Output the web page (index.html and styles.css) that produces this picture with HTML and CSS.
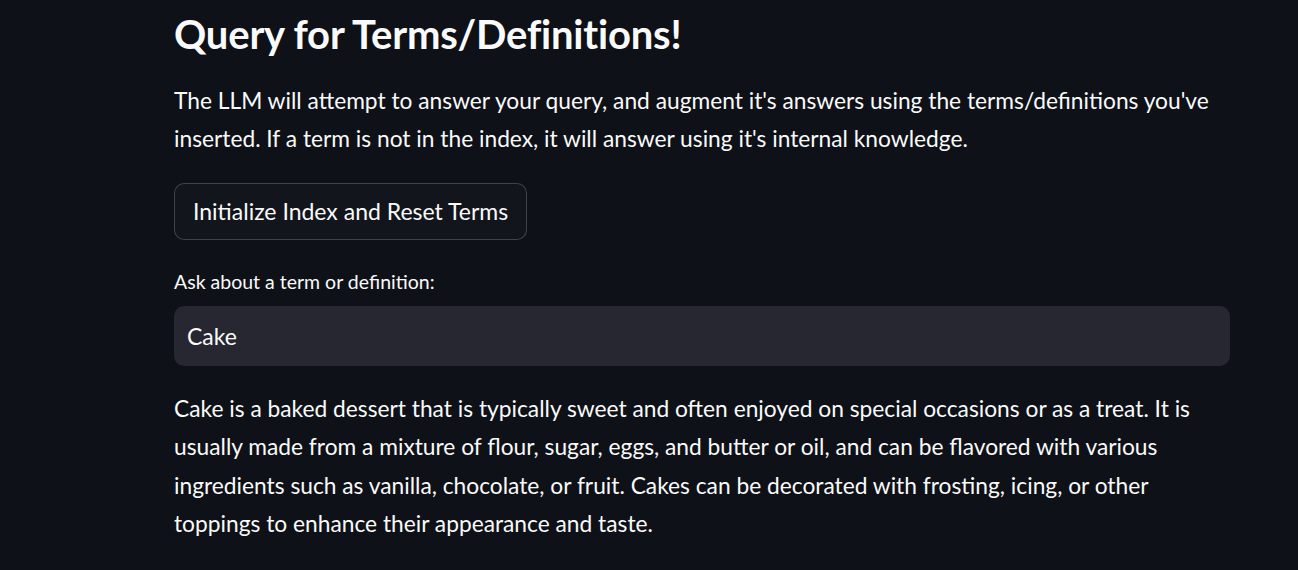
FILE: index.html
```html
<!DOCTYPE html>
<html>
<head>
<meta charset="utf-8">
<link rel="stylesheet" href="styles.css">
</head>
<body>
<main class="block">
  <h1 class="title">Query for Terms/Definitions!</h1>
  <p class="text intro">The LLM will attempt to answer your query, and augment it's answers using the terms/definitions you've inserted. If a term is not in the index, it will answer using it's internal knowledge.</p>
  <div class="btn-row"><button class="btn">Initialize Index and Reset Terms</button></div>
  <label class="field-label" for="q">Ask about a term or definition:</label>
  <div class="input-wrap"><input id="q" class="input" type="text" value="Cake"></div>
  <p class="text answer">Cake is a baked dessert that is typically sweet and often enjoyed on special occasions or as a treat. It is usually made from a mixture of flour, sugar, eggs, and butter or oil, and can be flavored with various ingredients such as vanilla, chocolate, or fruit. Cakes can be decorated with frosting, icing, or other toppings to enhance their appearance and taste.</p>
</main>
</body>
</html>
```
FILE: styles.css
```css
html, body {
  margin: 0;
  padding: 0;
  background: #0e1117;
  color: #fafafa;
  font-family: Lato, "Noto Sans", sans-serif;
  height: 100%;
  overflow: hidden;
}
.block {
  margin-left: 174px;
  width: 1056px;
  display: flex;
  flex-direction: column;
}
.title {
  margin: 0;
  padding-top: 8px;
  font-size: 40px;
  font-weight: 700;
  line-height: 52px;
  letter-spacing: -0.2px;
}
.text {
  margin: 0;
  font-size: 22.75px;
  line-height: 38.4px;
}
.intro {
  margin-top: 22px;
}
.btn-row {
  margin-top: 24px;
}
.btn {
  height: 57px;
  padding: 0 18px;
  background: #12151c;
  color: #fafafa;
  border: 1px solid rgba(250,250,250,0.2);
  border-radius: 10px;
  font-family: inherit;
  font-size: 23px;
}
.field-label {
  margin-top: 30px;
  font-size: 19.5px;
  line-height: 24px;
}
.input-wrap {
  margin-top: 12px;
}
.input {
  box-sizing: border-box;
  width: 100%;
  height: 60px;
  padding: 0 13px;
  background: #262730;
  color: #fafafa;
  border: none;
  border-radius: 10px;
  font-family: inherit;
  font-size: 23px;
  outline: none;
}
.answer {
  margin-top: 24px;
}
```
